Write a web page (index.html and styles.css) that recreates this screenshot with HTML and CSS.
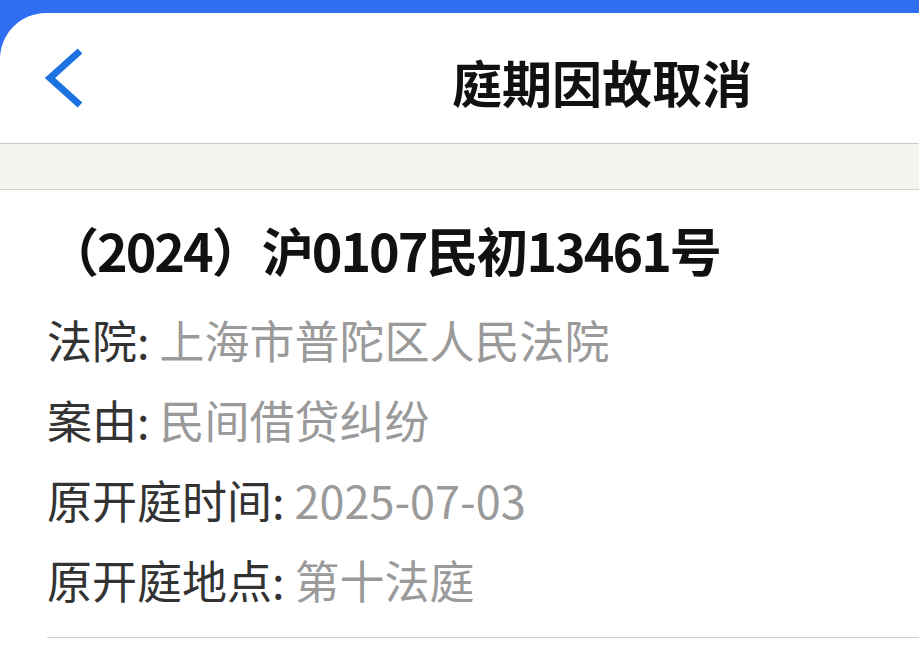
FILE: index.html
```html
<!DOCTYPE html>
<html lang="zh-CN">
<head>
<meta charset="utf-8">
<title>庭期因故取消</title>
<link rel="stylesheet" href="styles.css">
</head>
<body>
<div class="page">
  <header class="header">
    <svg class="back" viewBox="0 0 44 64" width="44" height="64" aria-hidden="true">
      <polyline points="40,5 10,32 40,59" fill="none" stroke="#1d72e2" stroke-width="7" stroke-linejoin="miter"/>
    </svg>
    <h1 class="title">庭期因故取消</h1>
  </header>
  <div class="band"></div>
  <main class="content">
    <div class="case">（2024）沪0107民初13461号</div>
    <div class="row"><span class="label">法院:</span> <span class="value">上海市普陀区人民法院</span></div>
    <div class="row"><span class="label">案由:</span> <span class="value">民间借贷纠纷</span></div>
    <div class="row"><span class="label">原开庭时间:</span> <span class="value">2025-07-03</span></div>
    <div class="row"><span class="label">原开庭地点:</span> <span class="value">第十法庭</span></div>
    <div class="divider"></div>
  </main>
</div>
</body>
</html>
```

FILE: styles.css
```css
html, body {
  margin: 0;
  padding: 0;
}

body {
  background: #2f6df1;
  font-family: "Noto Sans CJK SC", "Noto Sans", sans-serif;
  height: 661px;
  overflow: hidden;
}

.page {
  margin-top: 13px;
  background: #ffffff;
  border-top-left-radius: 46px;
  height: 648px;
}

.header {
  height: 131px;
  display: flex;
  align-items: center;
  padding-left: 40px;
  border-bottom: 1px solid #c9c9c9;
  box-sizing: border-box;
}

.back {
  display: block;
  flex: none;
}

.title {
  margin: 6px 167px 0 auto;
  font-size: 50px;
  font-weight: 700;
  color: #111111;
  line-height: 1;
}

.band {
  height: 45px;
  background: #f4f4ef;
  border-bottom: 1px solid #d2d2d2;
}

.content {
  padding: 25px 0 0 47px;
}

.case {
  font-size: 52px;
  font-weight: 700;
  line-height: 80px;
  height: 80px;
  color: #111111;
  margin-left: 0;
  margin-bottom: 5px;
  margin-top: -5px;
  padding-bottom: 5px;
  letter-spacing: -2px;
  white-space: nowrap;
}

.row {
  font-size: 45px;
  line-height: 80px;
  white-space: nowrap;
}

.label {
  color: #333333;
}

.value {
  color: #9a9a9a;
}

.divider {
  margin-top: 17px;
  border-top: 1px solid #cfcfcf;
}
```
